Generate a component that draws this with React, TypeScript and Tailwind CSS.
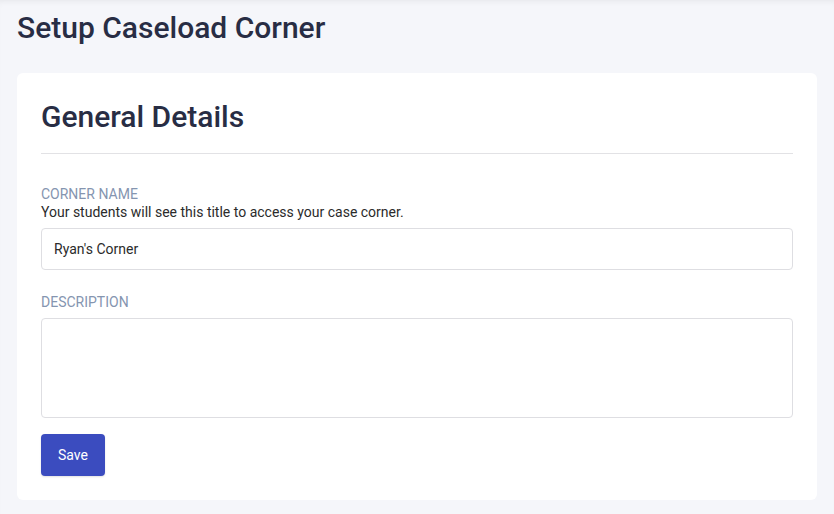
import React from 'react';

const App: React.FC = () => {
  return (
    <div
      className="min-h-[514px] bg-[#f5f6fa] px-[17px] pt-[8px] pb-[14px] shadow-[inset_0_5px_6px_-4px_rgba(0,0,0,0.07)]"
      style={{ fontFamily: 'Roboto, "Noto Sans", sans-serif' }}
    >
      {/* Page title */}
      <h1 className="text-[30px] leading-[40px] font-medium text-[#282d44]">Setup Caseload Corner</h1>

      {/* Card */}
      <div className="mt-[25px] bg-white rounded-md px-6 pt-[22px] pb-6">
        <h2 className="text-[30px] leading-[44px] font-medium text-[#282d44]">General Details</h2>
        <div className="mt-[14px] border-t border-[#e2e2e5]" />

        <div className="mt-[31px]">
          <label className="block text-[14px] leading-[18px] text-[#8595b0] uppercase">Corner Name</label>
          <p className="text-[14px] leading-[18px] text-[#2b2b2b]">Your students will see this title to access your case corner.</p>
          <input
            type="text"
            defaultValue="Ryan's Corner"
            className="mt-[7px] block w-full h-[42px] rounded border border-[#dedee2] px-3 text-[14px] text-[#2b2b2b] outline-none"
          />
        </div>

        <div className="mt-[23px]">
          <label className="block text-[14px] leading-[18px] text-[#8595b0] uppercase">Description</label>
          <textarea className="mt-[7px] block w-full h-[100px] rounded border border-[#dedee2] px-3 py-2 text-[14px] resize-none outline-none" />
        </div>

        <button className="mt-[16px] h-[42px] w-[64px] rounded bg-[#3b4cbf] text-white text-[14px] font-normal shadow-[0_1px_2px_rgba(0,0,0,0.12)]">
          Save
        </button>
      </div>
    </div>
  );
};

export default App;
